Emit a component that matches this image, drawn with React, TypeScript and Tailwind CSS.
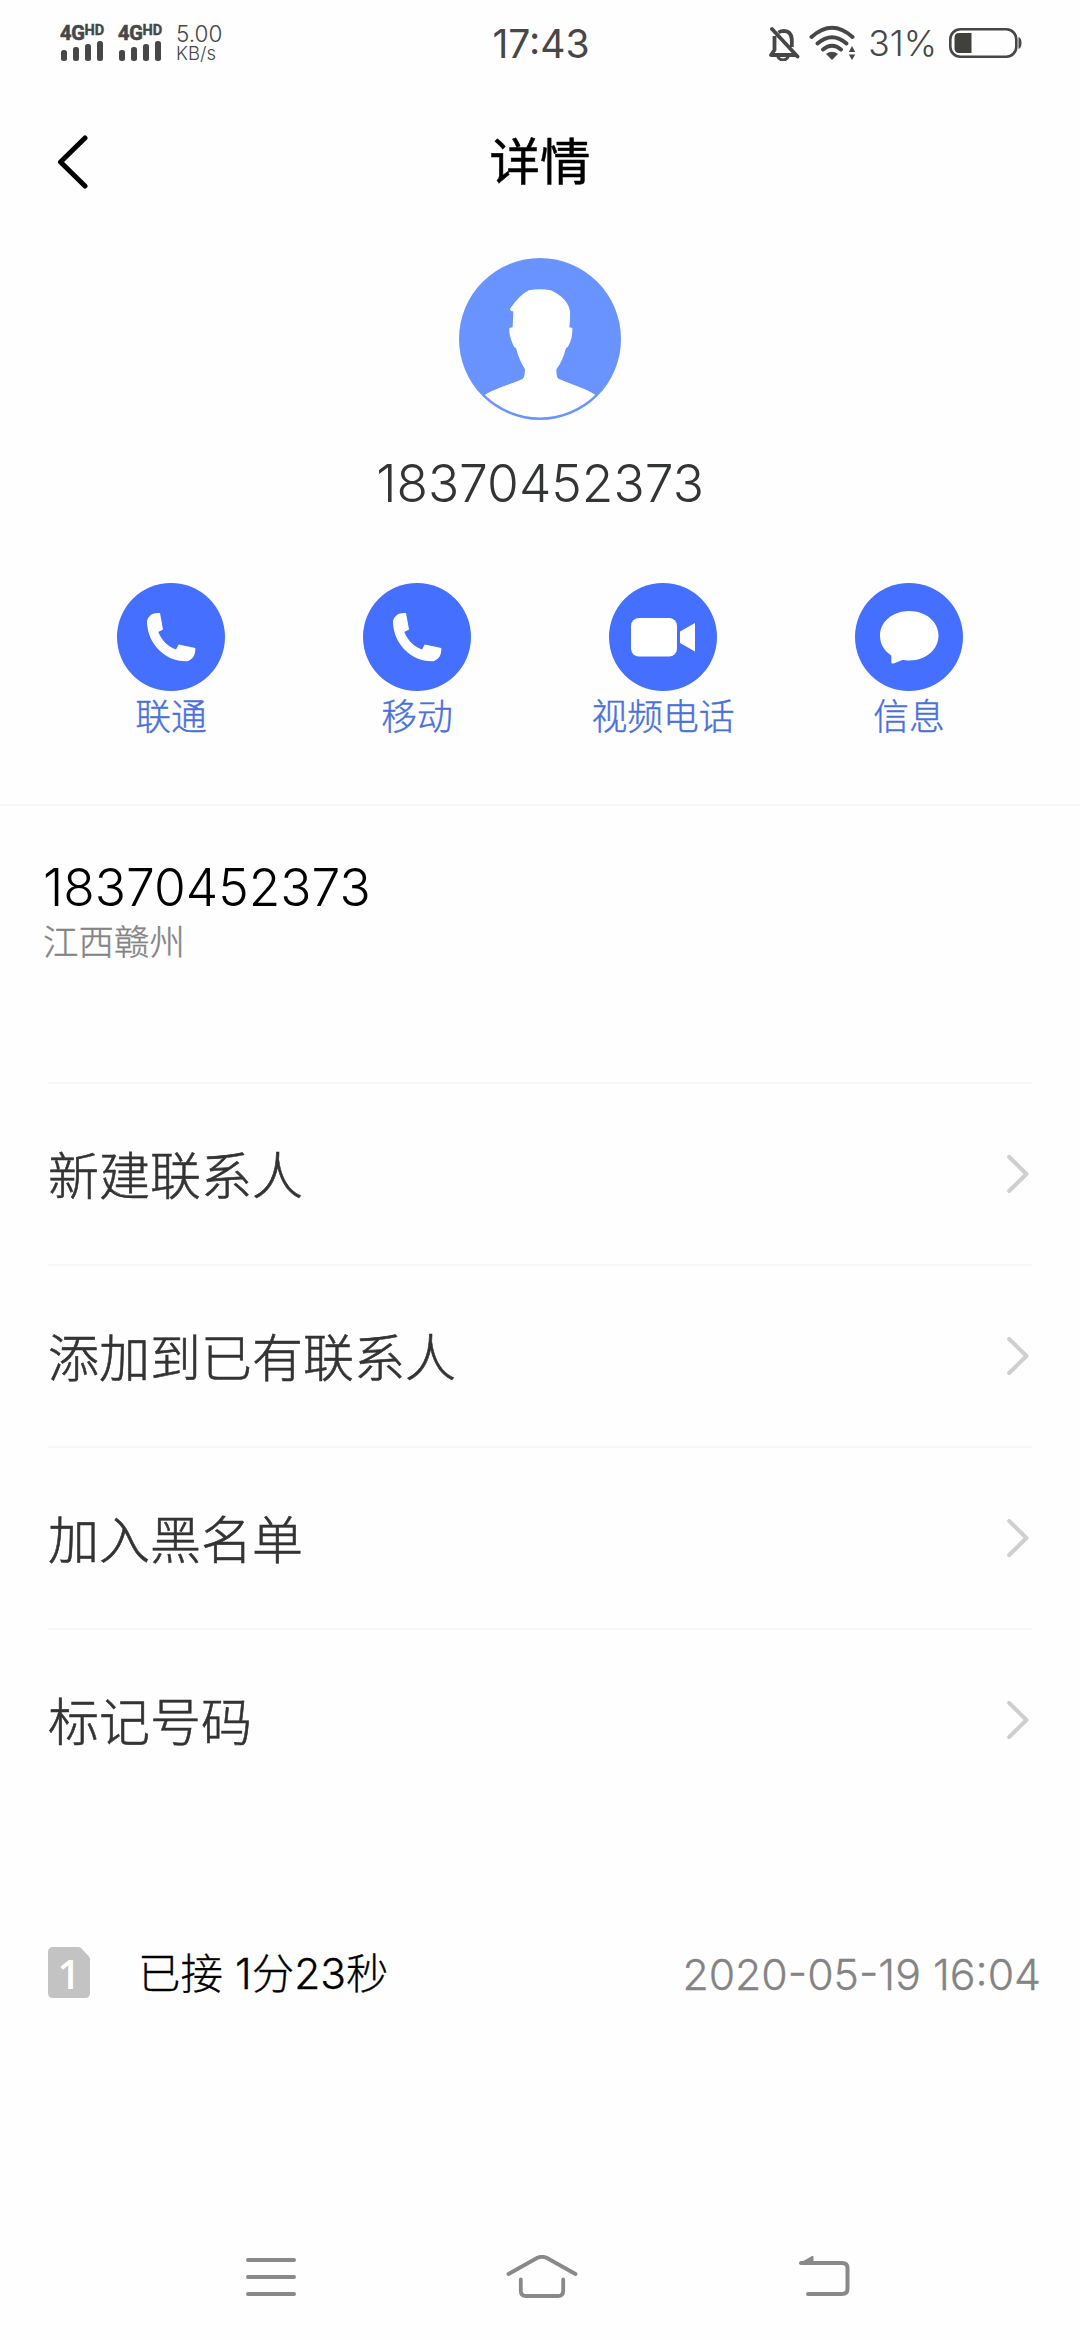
import type { ReactNode } from "react";

const phoneNumber = "18370452373";

const menuItems = ["新建联系人", "添加到已有联系人", "加入黑名单", "标记号码"];

function PhoneIcon() {
  return (
    <svg viewBox="0 0 108 108" className="size-full" fill="#fff">
      <path d="M43 30 L46 46.500 L41.300 49 C45 58 51 63.500 59 66.500 L61.700 61.500 L78.300 65 C78.500 71.500 76.500 76 70.500 78.200 C48 79 31 61 30 40 C29.500 34.500 34.500 29 43 30 Z" />
    </svg>
  );
}

function VideoIcon() {
  return (
    <svg viewBox="0 0 108 108" className="size-full" fill="#fff">
      <rect x="22" y="35" width="46" height="38.500" rx="8" />
      <path d="M71 48.500 L86 40 V68.500 L71 60 Z" />
    </svg>
  );
}

function MessageIcon() {
  return (
    <svg viewBox="0 0 108 108" className="size-full" fill="#fff">
      <path d="M54.300 28 C71 28 83.500 39 83.500 52.500 C83.500 66.500 71 77.500 54.300 77.500 C51.500 77.500 49.500 77.300 47.500 77 L38.500 80.500 C37 80.800 36.300 80 36.300 79 V72.500 C29 67.500 25 61 25 52.500 C25 39 37.500 28 54.300 28 Z" />
    </svg>
  );
}

const actions: { label: string; icon: ReactNode }[] = [
  { label: "联通", icon: <PhoneIcon /> },
  { label: "移动", icon: <PhoneIcon /> },
  { label: "视频电话", icon: <VideoIcon /> },
  { label: "信息", icon: <MessageIcon /> },
];

function Signal() {
  return (
    <div className="w-[58px]">
      <div className="flex h-4 items-start font-[Roboto,sans-serif] font-bold">
        <span className="text-[20px] leading-4 tracking-[-0.300px] [-webkit-text-stroke:0.6px_#474747]">4G</span>
        <span className="text-[14.500px] leading-[11px] [-webkit-text-stroke:0.4px_#474747]">HD</span>
      </div>
      <div className="ml-px flex h-5 items-end gap-1.5">
        <div className="h-[11px] w-1.5 rounded-[2.500px] bg-[#474747]" />
        <div className="h-3.5 w-1.5 rounded-[2.500px] bg-[#474747]" />
        <div className="h-[17px] w-1.5 rounded-[2.500px] bg-[#474747]" />
        <div className="h-5 w-1.5 rounded-[2.500px] bg-[#474747]" />
      </div>
    </div>
  );
}

function StatusBar() {
  return (
    <div className="grid h-[86px] grid-cols-[1fr_auto_1fr] items-center pr-[58px] pl-[60px] text-[#474747]">
      <div className="flex items-center">
        <Signal />
        <Signal />
        <div className="pb-px">
          <div className="text-[22.500px] leading-[21px] font-light">5.00</div>
          <div className="text-[18.500px] leading-[19px] font-[350]">KB/s</div>
        </div>
      </div>
      <div className="pt-px text-[39px] leading-10">17:43</div>
      <div className="flex items-center justify-end">
        {/* Muted bell */}
        <svg viewBox="0 0 32 36" className="mr-[9px] h-9 w-8" fill="none" stroke="#474747" strokeWidth="3.800">
          <path d="M6.500 11 V25 L3 30 H29" strokeLinejoin="round" />
          <path d="M10.500 7.500 Q13 5.800 16 5.800 Q23 6 23.800 14 V22" />
          <path d="M9.500 31 Q11 35 15 35 Q19 35 20.500 31" strokeWidth="3" />
          <path d="M4 4 L29.500 31.500" strokeLinecap="round" />
        </svg>
        {/* Wifi with traffic arrows */}
        <svg viewBox="0 0 48 36" className="mr-[11px] h-9 w-12" fill="none" stroke="#474747" strokeWidth="4" strokeLinecap="round">
          <path d="M2.500 12 Q23 -6.500 43.500 12" />
          <path d="M8.500 18.500 Q23 6 37.500 18.500" />
          <path d="M14 24.500 Q23 17 32 24.500" />
          <path d="M17 29 Q23 24.500 29 29 L23 35 Z" fill="#474747" stroke="none" />
          <path d="M43 21 L46.200 27 H39.800 Z M43 35 L46.200 29.500 H39.800 Z" fill="#474747" stroke="none" />
        </svg>
        <span className="mr-3 pt-0.5 text-[35.500px] leading-9 font-[350]">31%</span>
        <svg viewBox="0 0 73 30" className="h-[30px] w-[73px]">
          <rect x="1.300" y="1.300" width="66" height="27.400" rx="10" fill="none" stroke="#474747" strokeWidth="2.600" />
          <path d="M10 5 H22.500 V25 H10 Q5.500 25 5.500 20 V10 Q5.500 5 10 5 Z" fill="#40413a" />
          <path d="M69.500 9 Q72.500 10 72.500 15 Q72.500 20 69.500 21 Z" fill="#474747" />
        </svg>
      </div>
    </div>
  );
}

function Avatar() {
  return (
    <svg viewBox="0 0 486 486" className="size-[162px]">
      <circle cx="243" cy="243" r="243" fill="#6994ff" />
      <path
        fill="#fff"
        d="M77 410 C120 386 160 378 188 364 Q197 360 197 346 L198 334 Q180 306 171 270 Q165 270 163 262 Q149 230 151 210 L161 208 L163 160 Q154 160 153 152 Q185 108 210 97 Q243 90 275 97 Q326 120 333 160 Q334 180 331 208 L340 210 Q341 240 329 262 Q327 270 321 270 Q310 312 292 334 L293 350 Q294 361 302 364 C340 380 375 390 409 410 A236 236 0 0 1 77 410 Z"
      />
    </svg>
  );
}

export default function App() {
  return (
    <div className="flex h-[2340px] w-[1080px] flex-col overflow-hidden bg-[#fefefe] font-[Inter,'Noto_Sans_CJK_SC',sans-serif]">
      <StatusBar />

      {/* Title bar */}
      <header className="grid h-[151px] grid-cols-[1fr_auto_1fr] items-center px-[57px]">
        <svg viewBox="0 0 32 54" className="h-[54px] w-8" fill="none" stroke="#000" strokeWidth="5" strokeLinecap="round" strokeLinejoin="round">
          <path d="M28 3 L3.500 27 L28 51" />
        </svg>
        <h1 className="text-[50.500px] leading-[60px] text-black [-webkit-text-stroke:0.5px_#000]">详情</h1>
      </header>

      {/* Contact and quick actions */}
      <section className="flex h-[569px] flex-col items-center border-b-2 border-[#f7f7f7] pt-[21px]">
        <Avatar />
        <p className="mt-[33px] text-[51.500px] leading-[60px] font-light text-[#333535]">{phoneNumber}</p>
        <div className="mt-[70px] grid w-[984px] grid-cols-4">
          {actions.map((a) => (
            <div key={a.label} className="flex flex-col items-center">
              <div className="size-[108px] rounded-full bg-[#456fff]">{a.icon}</div>
              <span className="text-[35.800px] leading-[52px] font-light text-[#4a70dd] [-webkit-text-stroke:0.4px_#4a70dd]">{a.label}</span>
            </div>
          ))}
        </div>
      </section>

      {/* Number and its region */}
      <section className="h-[276px] pt-[51px] pl-[43px]">
        <p className="text-[51.500px] leading-[60px] font-light text-black">{phoneNumber}</p>
        <p className="text-[35.500px] leading-[52px] font-light text-[#848484] [-webkit-text-stroke:0.4px_#848484]">江西赣州</p>
      </section>

      {/* Menu */}
      <ul className="px-12">
        {menuItems.map((item) => (
          <li key={item} className="flex h-[182px] items-center justify-between border-t-2 border-[#f7f7f7] pr-[3px]">
            <span className="pt-[5px] text-[51px] leading-[60px] font-light text-[#333] [-webkit-text-stroke:0.6px_#333]">{item}</span>
            <svg viewBox="0 0 22 38" className="h-[38px] w-[22px]" fill="none" stroke="#cfcfcf" strokeWidth="4" strokeLinecap="round" strokeLinejoin="round">
              <path d="M2.200 2 L19.500 19 L2.200 36" />
            </svg>
          </li>
        ))}
      </ul>

      {/* Call log entry */}
      <section className="mt-[108px] flex h-[108px] items-center pr-[39px] pl-12">
        <div className="relative flex h-[51px] w-[42px] items-center justify-center">
          <svg viewBox="0 0 42 51" className="absolute inset-0 size-full">
            <path d="M5 0 H30 Q32 0 33 1 L41 9.500 Q42 10.500 42 12 V46 Q42 51 37 51 H5 Q0 51 0 46 V5 Q0 0 5 0 Z" fill="#c3c3c3" />
          </svg>
          <span className="relative pt-1 font-['Open_Sans',sans-serif] text-[40px] leading-none font-semibold text-white">1</span>
        </div>
        <span className="ml-[48px] pt-1 text-[42.500px] leading-[50px] font-light text-black [-webkit-text-stroke:0.3px_#000]">已接 1分23秒</span>
        <span className="ml-auto pt-[5px] text-[42.800px] leading-[50px] font-light text-[#848484] [font-feature-settings:'case'] [-webkit-text-stroke:0.3px_#848484]">2020-05-19 16:04</span>
      </section>

      {/* System navigation */}
      <nav className="mt-auto flex h-[126px] items-center pl-[246px]">
        <svg viewBox="0 0 50 44" className="h-11 w-[50px]" fill="none" stroke="#898989" strokeWidth="4" strokeLinecap="round">
          <path d="M2 5 H48 M2 22 H48 M2 39 H48" />
        </svg>
        <svg viewBox="0 0 72 44" className="ml-[210px] h-11 w-[72px]" fill="none" stroke="#898989" strokeWidth="3.800" strokeLinecap="round">
          <path d="M2.500 19 L31 3 Q36 0.500 41 3 L69.500 19" />
          <path d="M14.800 24.500 V36 Q14.800 41 20 41 H52 Q57.200 41 57.200 36 V24.500" />
        </svg>
        <svg viewBox="0 0 52 44" className="ml-[220px] h-11 w-[52px]" fill="none" stroke="#898989" strokeWidth="4" strokeLinecap="round">
          <path d="M3 8 H44 Q49.500 8 49.500 13 V34 Q49.500 39 44 39 H10" />
          <path d="M1 8.500 L14 1 Q15.500 0.500 15.500 2 V9 H2 Z" fill="#898989" stroke="none" />
        </svg>
      </nav>
    </div>
  );
}
